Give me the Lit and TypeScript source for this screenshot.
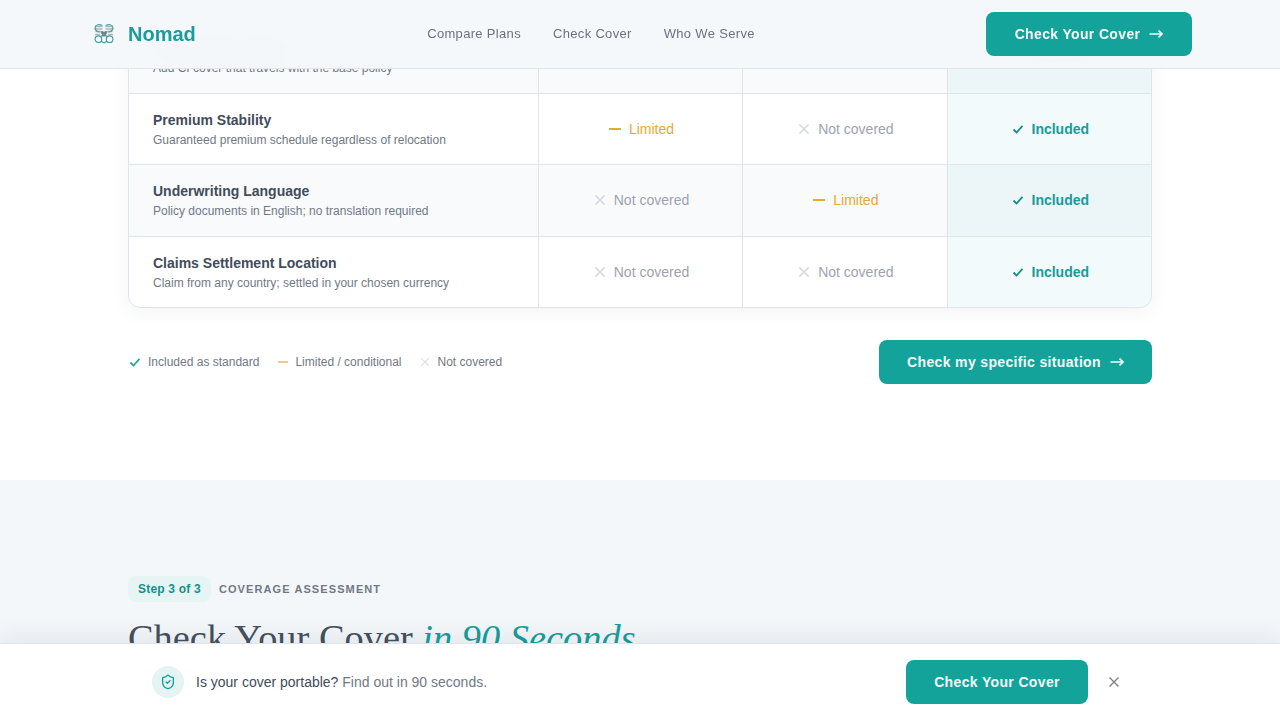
import { html, css, LitElement, svg } from "lit";
import { customElement } from "lit/decorators.js";

type Mark = "yes" | "part" | "no";

interface Row {
  name: string;
  desc: string;
  cells: Mark[];
}

const rows: Row[] = [
  { name: "Critical Illness Rider", desc: "Add CI cover that travels with the base policy", cells: ["no", "no", "yes"] },
  { name: "Premium Stability", desc: "Guaranteed premium schedule regardless of relocation", cells: ["part", "no", "yes"] },
  { name: "Underwriting Language", desc: "Policy documents in English; no translation required", cells: ["no", "part", "yes"] },
  { name: "Claims Settlement Location", desc: "Claim from any country; settled in your chosen currency", cells: ["no", "no", "yes"] },
];

const labels: Record<Mark, string> = { yes: "Included", part: "Limited", no: "Not covered" };

const markIcon = (m: Mark) => {
  if (m === "yes") return svg`<polyline points="2.5,7.5 5.5,10.5 11.5,3.8" stroke="currentColor" stroke-width="1.8" fill="none" />`;
  if (m === "part") return svg`<line x1="1" y1="7" x2="13" y2="7" stroke="currentColor" stroke-width="2" />`;
  return svg`<path d="M2.5 2.5 11.5 11.5 M11.5 2.5 2.5 11.5" stroke="currentColor" stroke-width="1.4" fill="none" />`;
};

const arrow = html`<svg class="arrow" width="14" height="14" viewBox="0 0 14 14" fill="none" stroke="currentColor" stroke-width="1.6"><path d="M0.5 7H13M9.5 3.6 13 7 9.5 10.4" /></svg>`;

@customElement("app-root")
export class AppRoot extends LitElement {
  static styles = css`
    :host {
      display: block;
      position: relative;
      height: 720px;
      overflow: hidden;
      background: #fff;
      font-family: "Liberation Sans", Arial, sans-serif;
    }

    .nav {
      position: absolute;
      top: 0;
      left: 0;
      right: 0;
      z-index: 5;
      height: 68px;
      box-sizing: content-box;
      border-bottom: 1px solid #dfe5ea;
      background: rgba(245, 248, 250, 0.96);
      backdrop-filter: blur(12px);
      display: flex;
      align-items: center;
      justify-content: space-between;
      padding: 0 88px;
    }

    .brand {
      display: flex;
      align-items: center;
      gap: 12px;
      margin-left: 4px;
      width: 104px;
    }

    .brand-name {
      font-size: 20px;
      font-weight: 700;
      color: #179e9c;
    }

    .links {
      display: flex;
      gap: 32px;
      font-size: 13px;
      letter-spacing: 0.325px;
      line-height: 15px;
      margin-top: -2px;
      color: #6b7280;
    }

    .btn {
      display: flex;
      align-items: center;
      justify-content: center;
      gap: 9px;
      height: 44px;
      box-sizing: border-box;
      border-radius: 8px;
      background: #14a39a;
      color: #f2fbfa;
      font-size: 14px;
      font-weight: 700;
      letter-spacing: 0.35px;
    }

    .nav .btn {
      width: 206px;
    }

    main {
      padding-top: 21px;
    }

    .wrap {
      width: 1024px;
      margin: 0 auto;
    }

    .table {
      border: 1px solid #dde5eb;
      border-radius: 12px;
      overflow: hidden;
      box-shadow: 0 4px 20px rgba(15, 23, 42, 0.05);
    }

    .row {
      display: grid;
      grid-template-columns: 2fr 1fr 1fr 1fr;
      height: 71.5px;
      border-bottom: 1px solid #dde5eb;
      box-sizing: border-box;
    }

    .row:last-child {
      border-bottom: none;
      height: 70.5px;
    }

    .row:nth-child(odd) {
      background: #f8fafc;
    }

    .feature {
      padding: 0 24px;
      display: flex;
      flex-direction: column;
      justify-content: center;
      gap: 2px;
    }

    .feature b {
      font-size: 14px;
      line-height: 20px;
      color: #414c5b;
    }

    .feature span {
      font-size: 12px;
      line-height: 16px;
      color: #717986;
    }

    .cell {
      display: flex;
      align-items: center;
      justify-content: center;
      gap: 7px;
      padding-left: 1px;
      font-size: 14px;
      border-left: 1px solid #dde5eb;
    }

    .cell.last {
      background: rgba(20, 160, 175, 0.05);
    }

    .yes {
      color: #179c9c;
      font-weight: 700;
    }

    .yes svg {
      color: #148f8c;
    }

    .part {
      color: #e9a92f;
    }

    .no {
      color: #9ca3af;
    }

    .no svg {
      color: #d1d5db;
    }

    .after {
      display: flex;
      align-items: center;
      justify-content: space-between;
      margin-top: 32px;
      padding-bottom: 96px;
    }

    .legend {
      display: flex;
      gap: 18px;
      font-size: 12px;
      color: #717986;
    }

    .legend div {
      display: flex;
      align-items: center;
      gap: 6px;
    }

    .legend svg {
      display: block;
    }

    .legend .part svg {
      color: #f1c98b;
    }

    .legend .no svg {
      color: #dcdfe4;
    }

    .legend .yes svg {
      color: #2ba894;
    }

    .legend span {
      color: #717986;
      font-weight: 400;
    }

    .after .btn {
      width: 273px;
    }

    .assess {
      background: #f3f7fa;
      padding-top: 96px;
      height: 300px;
    }

    .step {
      display: flex;
      align-items: center;
      gap: 8px;
    }

    .pill {
      height: 26px;
      padding: 0 10px;
      display: flex;
      align-items: center;
      border-radius: 8px;
      background: #e6f5f4;
      color: #12918b;
      font-size: 12px;
      font-weight: 700;
      letter-spacing: 0.2px;
    }

    .eyebrow {
      font-size: 11px;
      font-weight: 700;
      letter-spacing: 1.1px;
      color: #717986;
    }

    h2 {
      margin: 13px 0 0;
      font-family: "Liberation Serif", "Times New Roman", serif;
      font-size: 38.4px;
      line-height: 46px;
      font-weight: 400;
      color: #465160;
    }

    h2 em {
      color: #179e9c;
    }

    .bar {
      position: absolute;
      left: 0;
      right: 0;
      bottom: 0;
      z-index: 6;
      height: 77px;
      box-sizing: border-box;
      border-top: 1px solid #dfe5ea;
      background: #fff;
      box-shadow: 0 -4px 24px rgba(15, 23, 42, 0.08);
      display: flex;
      align-items: center;
      justify-content: space-between;
      padding: 0 152px;
    }

    .pitch {
      display: flex;
      align-items: center;
      gap: 12px;
      font-size: 14px;
      color: #414c5b;
    }

    .pitch span span {
      color: #717986;
    }

    .badge {
      width: 32px;
      height: 32px;
      border-radius: 50%;
      background: #e3f4f3;
      color: #179e9c;
      display: flex;
      align-items: center;
      justify-content: center;
    }

    .actions {
      display: flex;
      align-items: center;
      gap: 12px;
    }

    .actions .btn {
      width: 182px;
    }

    .close {
      width: 28px;
      height: 28px;
      display: flex;
      align-items: center;
      justify-content: center;
      color: #7b8189;
    }
  `;

  // small knot mark, four curled corners around a dark centre
  private logo() {
    return html`<svg width="24" height="24" viewBox="0 0 24 24" fill="none" stroke-linecap="round">
      <g stroke="#a9b8bd" stroke-width="1.4">
        <path d="M3.5 4.5h6.5M3 7h7M4 9.5h5M14 4.5h6.5M14 7h7M15 9.5h5M3.5 12.5h4M16.5 12.5h4" />
      </g>
      <g stroke="#4f9da0" stroke-width="1.2">
        <path d="M10 3.2C7.5 2 3.5 2.5 3.2 5.5 3 8 5 9.5 7 10" />
        <path d="M14 3.2C16.5 2 20.5 2.5 20.8 5.5 21 8 19 9.5 17 10" />
        <circle cx="6.4" cy="17.2" r="3.3" />
        <circle cx="17.6" cy="17.2" r="3.3" />
        <path d="M8.5 14.5C10 13.2 14 13.2 15.5 14.5M9.5 19.5C11 20.8 13 20.8 14.5 19.5" />
      </g>
      <path d="M8.8 9.6C10 8.5 11.3 9 12 10.2 12.7 9 14 8.5 15.2 9.6 15.8 11.4 13.4 13.6 12 14.8 10.6 13.6 8.2 11.4 8.8 9.6Z" fill="#74838c" />
    </svg>`;
  }

  private renderRow(r: Row) {
    return html`<div class="row">
      <div class="feature"><b>${r.name}</b><span>${r.desc}</span></div>
      ${r.cells.map(
        (c, i) => html`<div class="cell ${c} ${i === 2 ? "last" : ""}">
          <svg width="14" height="14" viewBox="0 0 14 14">${markIcon(c)}</svg>
          <span>${labels[c]}</span>
        </div>`
      )}
    </div>`;
  }

  render() {
    return html`
      <header class="nav">
        <div class="brand">${this.logo()}<span class="brand-name">Nomad</span></div>
        <nav class="links"><span>Compare Plans</span><span>Check Cover</span><span>Who We Serve</span></nav>
        <div class="btn">Check Your Cover ${arrow}</div>
      </header>

      <main>
        <div class="wrap">
          <div class="table">${rows.map((r) => this.renderRow(r))}</div>
          <div class="after">
            <div class="legend">
              <div class="yes"><svg width="14" height="14" viewBox="0 0 14 14">${markIcon("yes")}</svg><span>Included as standard</span></div>
              <div class="part"><svg width="12" height="14" viewBox="0 0 14 14" preserveAspectRatio="none">${markIcon("part")}</svg><span>Limited / conditional</span></div>
              <div class="no"><svg width="12" height="12" viewBox="0 0 14 14">${markIcon("no")}</svg><span>Not covered</span></div>
            </div>
            <div class="btn">Check my specific situation ${arrow}</div>
          </div>
        </div>

        <section class="assess">
          <div class="wrap">
            <div class="step"><span class="pill">Step 3 of 3</span><span class="eyebrow">COVERAGE ASSESSMENT</span></div>
            <h2>Check Your Cover <em>in 90 Seconds</em></h2>
          </div>
        </section>
      </main>

      <div class="bar">
        <div class="pitch">
          <div class="badge">
            <svg width="16" height="16" viewBox="0 0 24 24" fill="none" stroke="currentColor" stroke-width="2" stroke-linecap="round" stroke-linejoin="round">
              <path d="M20 13c0 5-3.5 7.5-7.66 8.95a1 1 0 0 1-.67-.01C7.5 20.5 4 18 4 13V6a1 1 0 0 1 1-1c2 0 4.5-1.2 6.24-2.72a1.17 1.17 0 0 1 1.52 0C14.51 3.81 17 5 19 5a1 1 0 0 1 1 1z" />
              <path d="m9 12 2 2 4-4" />
            </svg>
          </div>
          <span>Is your cover portable? <span>Find out in 90 seconds.</span></span>
        </div>
        <div class="actions">
          <div class="btn">Check Your Cover</div>
          <div class="close">
            <svg width="14" height="14" viewBox="0 0 14 14" fill="none" stroke="currentColor" stroke-width="1.4"><path d="M2.5 2.5 11.5 11.5M11.5 2.5 2.5 11.5" /></svg>
          </div>
        </div>
      </div>
    `;
  }
}
